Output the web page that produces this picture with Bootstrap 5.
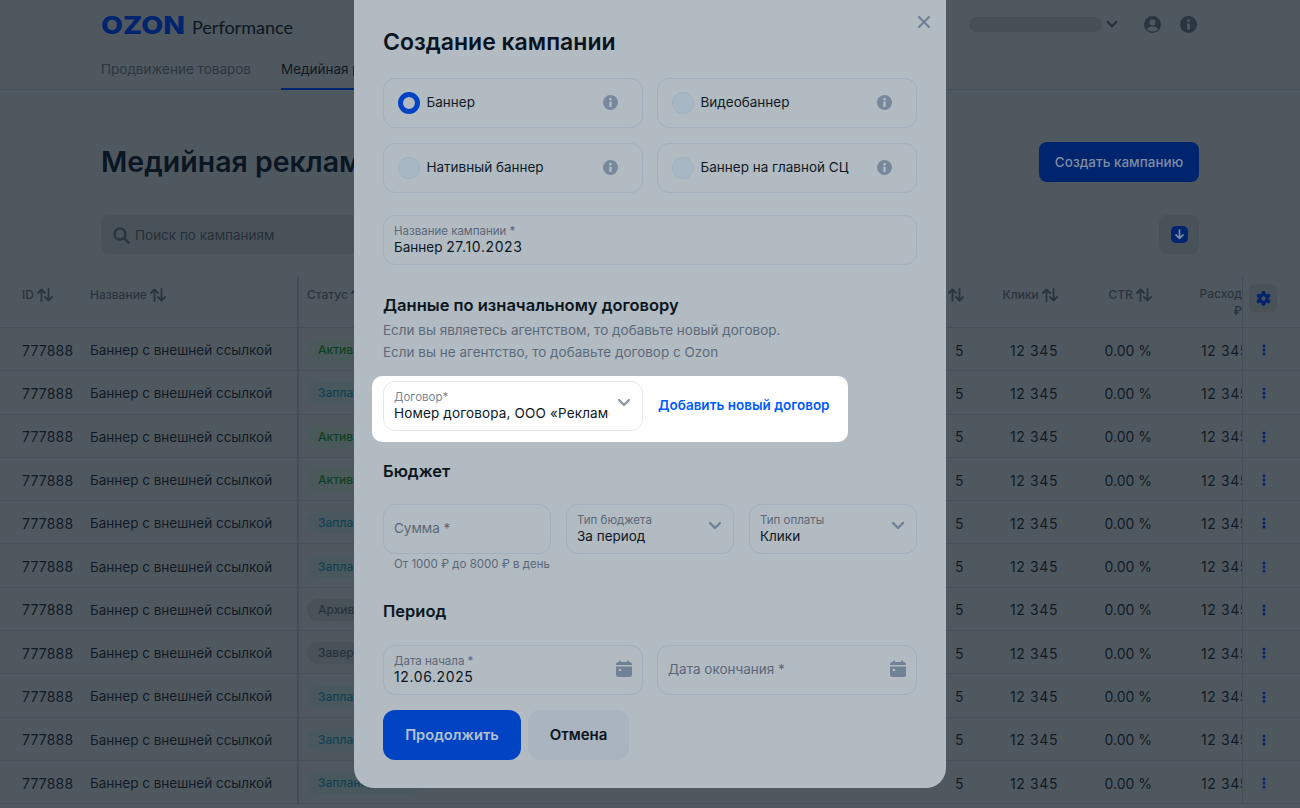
<!DOCTYPE html>
<html lang="ru">
<head>
  <meta charset="UTF-8" />
  <meta name="viewport" content="width=device-width, initial-scale=1" />
  <title>Создание кампании – Ozon Performance</title>
  <link href="https://cdn.jsdelivr.net/npm/bootstrap@5.3.2/dist/css/bootstrap.min.css" rel="stylesheet" />
  <style>
    html, body { height: 808px; overflow: hidden; }
    body { background: #50585f; font-family: Inter, "Liberation Sans", sans-serif; font-size: 13.5px; color: #101b26; position: relative; }
    .dg { font-size: 14px; letter-spacing: .6px; }

    /* страница под модалкой */
    .top-head { height: 90px; border-bottom: 1px solid #465059; padding-left: 101px; position: relative; }
    .logo-row { height: 53px; align-items: center; }
    .logo-word { width: 84px; height: 20px; margin-right: 7px; margin-top: -1px; }
    .logo-perf { font-family: Lato, sans-serif; font-size: 18px; color: #0b1722; padding-top: 1px; }
    .tab-row { gap: 30px; height: 37px; }
    .tab-link { color: #2c3640; line-height: 32px; height: 37px; }
    .tab-active { color: #0d1822; border-bottom: 2px solid #00246e; }
    .top-right { position: absolute; top: 16px; left: 969px; align-items: center; }
    .acc-pill { width: 133px; height: 15px; background: #474f56; border-radius: 8px; margin-right: 4px; }
    .page-title { font-size: 28.500px; font-weight: 600; line-height: 38px; color: #0a1622; margin: 0; white-space: nowrap; }
    .title-row { height: 40px; margin-top: 52px; padding: 0 101px; align-items: center; }
    .btn-create { width: 160px; height: 40px; background: #00246e; color: #7e8ca3; border: 0; border-radius: 8px; font-size: 13.5px; font-weight: 500; padding: 0; }
    .tools-row { margin-top: 33px; height: 39px; padding: 0 101px; }
    .search-box { width: 300px; background: #4a5259; border-radius: 8px; color: #262f38; gap: 5px; padding-left: 12px; padding-top: 1px; }
    .square-btn { width: 40px; background: #4a5259; border-radius: 8px; }

    .grid-wrap { margin-top: 22px; }
    .t-head, .t-row { display: flex; }
    .t-head { height: 52px; border-bottom: 1px solid #454e56; color: #2a343e; font-size: 12px; font-weight: 500; }
    .t-row { height: 43.3px; border-bottom: 1px solid #485159; align-items: center; white-space: nowrap; }
    .c-id { width: 90px; padding-left: 22px; flex: none; }
    .c-name { width: 209px; flex: none; border-right: 2px solid #454e56; height: 100%; display: flex; align-items: center; }
    .c-status { width: 130px; margin-right: 389px; padding-left: 8px; flex: none; overflow: hidden; white-space: nowrap; }
    .c-num { width: 146px; flex: none; text-align: right; }
    .c-clicks, .c-ctr { width: 94px; flex: none; text-align: right; }
    .c-spend { width: 91px; flex: none; overflow: hidden; border-right: 1px solid #454e56; height: 100%; display: flex; align-items: center; padding-left: 49px; }
    .c-act { flex: 1; display: flex; padding-left: 19px; }
    .t-row > div { padding-top: 2px; }
    .t-head > div { padding-top: 10px; height: 51px; display: block; }
    .t-head .c-spend { line-height: 17px; padding-top: 9px; padding-left: 0; text-align: right; padding-right: 0; }
    .t-head .c-act { padding-left: 6px; padding-top: 8px; }
    .sort-ic { width: 16px; height: 14px; vertical-align: -3px; }
    .gear-box { width: 28px; height: 28px; background: #4a5259; border-radius: 6px; display: flex; align-items: center; justify-content: center; }
    .chip-s { display: inline-block; height: 22px; line-height: 22px; padding: 0 11px; border-radius: 11px; font-size: 12px; font-weight: 500; }
    .chip-on { background: #4a5a5a; color: #0f3f24; }
    .chip-plan { background: #49585f; color: #15404f; }
    .chip-off { background: #4a5259; color: #28323b; }

    /* модалка */
    .modal-sheet { position: absolute; left: 354px; top: 0; width: 592px; height: 788px; background: #b2bac2; border-radius: 0 0 20px 20px; padding: 28px 29px 0; }
    .close-x { position: absolute; right: 15px; top: 15px; width: 14px; height: 14px; }
    .sheet-title { font-size: 23px; font-weight: 600; line-height: 28px; color: #0a1420; margin: 0 0 21.500px; }
    .pick-grid { display: grid; grid-template-columns: 260px 260px; column-gap: 14px; row-gap: 15px; }
    .pick-tile { height: 50px; border: 1.5px solid #a3afbc; border-radius: 12px; padding: 0 13.500px; gap: 7px; align-items: center; color: #0f1a25; }
    .radio-dot { width: 22px; height: 22px; border-radius: 50%; background: #a8b7c4; border: 1px solid #9fb0bf; flex: none; }
    .radio-on { background: #b2bac2; border: 5.5px solid #0044c4; }
    .pick-info { margin-left: auto; margin-right: 11px; flex: none; }
    .fld { height: 50px; border: 1.5px solid #a3afbc; border-radius: 12px; padding: 0 10px; position: relative; color: #0c1722; }
    .fld-lbl { font-size: 11.500px; line-height: 14px; color: #5a6878; display: block; padding-top: 8px; }
    .fld-val { line-height: 18px; white-space: nowrap; display: block; }
    .fld-ph { line-height: 47px; color: #5a6878; }
    .fld-ic { position: absolute; right: 11px; top: 16px; }
    .sec-head { font-size: 16.500px; font-weight: 600; line-height: 24px; color: #0b1620; margin: 0; }
    .sec-sub { line-height: 22px; color: #5c6a78; }
    .hl-box { display: inline-flex; background: #fff; border-radius: 10px; padding: 5px 18px 11px 11px; margin: 13px 0 0 -11px; gap: 15px; align-items: center; }
    .hl-box .fld { width: 260px; border-color: #e3e8ee; overflow: hidden; }
    .hl-box .fld-val { width: 215px; overflow: hidden; letter-spacing: .15px; }
    .hl-box .fld-lbl { color: #7a8696; }
    .hl-link { color: #005bff; font-weight: 600; font-size: 13.5px; text-decoration: none; white-space: nowrap; padding-bottom: 1px; }
    .three-grid { display: grid; grid-template-columns: 168px 168px 168px; column-gap: 15px; }
    .two-grid { display: grid; grid-template-columns: 260px 260px; column-gap: 14px; }
    .hint-line { font-size: 11.500px; line-height: 16px; color: #5a6878; padding-left: 11px; margin-top: 2px; }
    .btn-go { width: 138px; height: 50px; background: #0044c4; color: #b4c0d0; border: 0; border-radius: 12px; font-weight: 600; font-size: 14.700px; padding: 0; }
    .btn-no { width: 101px; height: 50px; background: #a9b4be; color: #0a1420; border: 0; border-radius: 12px; font-weight: 600; font-size: 15px; padding: 0; }
    .btn-pair { gap: 7px; margin-top: 15px; }
  </style>
</head>
<body>
  <svg width="0" height="0" class="position-absolute">
    <defs>
      <symbol id="ic-info" viewBox="0 0 16 16"><circle cx="8" cy="8" r="8" fill="currentColor"/><circle cx="8" cy="4.4" r="1.4" fill="var(--hole)"/><rect x="6.7" y="6.9" width="2.6" height="6" rx="1" fill="var(--hole)"/></symbol>
      <symbol id="ic-chev" viewBox="0 0 14 10"><path d="M2 2l5 5 5-5" fill="none" stroke="currentColor" stroke-width="2.400" stroke-linecap="round" stroke-linejoin="round"/></symbol>
      <symbol id="ic-cal" viewBox="0 0 18 18"><path d="M5 0.5a1 1 0 0 1 1 1V2h6v-.5a1 1 0 0 1 2 0V2h.5A2.5 2.5 0 0 1 17 4.500V5H1v-.5A2.500 2.500 0 0 1 3.500 2H4v-.5a1 1 0 0 1 1-1z" fill="currentColor"/><path d="M1 6.500h16v8A2.500 2.500 0 0 1 14.500 17h-11A2.500 2.500 0 0 1 1 14.500z" fill="currentColor"/><circle cx="5" cy="10" r="1.300" fill="#b2bac2"/></symbol>
      <symbol id="ic-sort" viewBox="0 0 16 14"><path d="M4.500 13V2M1 5l3.500-3.500L8 5M11.500 1v11M8 9l3.500 3.500L15 9" fill="none" stroke="currentColor" stroke-width="1.800" stroke-linecap="round" stroke-linejoin="round"/></symbol>
    </defs>
  </svg>

  <header class="top-head">
    <div class="d-flex logo-row">
      <svg class="logo-word" viewBox="0 0 84 20"><text x="0" y="18" font-family="Inter, sans-serif" font-weight="800" font-size="25" fill="#00246e" textLength="84" lengthAdjust="spacingAndGlyphs">OZON</text></svg>
      <span class="logo-perf">Performance</span>
    </div>
    <nav class="d-flex tab-row">
      <span class="tab-link">Продвижение товаров</span>
      <span class="tab-link tab-active">Медийная реклама</span>
    </nav>
    <div class="d-flex top-right">
      <div class="acc-pill"></div>
      <svg width="12" height="9" viewBox="0 0 14 10" style="color:#262f38;margin-right:26px"><use href="#ic-chev"/></svg>
      <svg width="17" height="17" viewBox="0 0 17 17" style="margin-right:19px"><circle cx="8.500" cy="8.500" r="8.500" fill="#2b353f"/><circle cx="8.500" cy="6.500" r="3" fill="#50585f"/><path d="M3 13.500c1-2.500 3-3 5.500-3s4.500.5 5.500 3c-1.500 1.500-3.500 2-5.500 2s-4-.5-5.500-2z" fill="#50585f"/></svg>
      <svg width="17" height="17" style="color:#2b353f;--hole:#50585f"><use href="#ic-info"/></svg>
    </div>
  </header>

  <div class="d-flex justify-content-between title-row">
    <h1 class="page-title">Медийная реклама</h1>
    <button class="btn-create" type="button">Создать кампанию</button>
  </div>
  <div class="d-flex justify-content-between tools-row">
    <div class="d-flex align-items-center search-box">
      <svg width="17" height="17" viewBox="0 0 17 17"><circle cx="7" cy="7" r="5.500" fill="none" stroke="#2b353f" stroke-width="2.400"/><path d="M11 11l4.500 4.500" stroke="#2b353f" stroke-width="2.600" stroke-linecap="round"/></svg>
      <span>Поиск по кампаниям</span>
    </div>
    <div class="d-flex align-items-center justify-content-center square-btn">
      <svg width="17" height="17" viewBox="0 0 17 17"><rect width="17" height="17" rx="5" fill="#00246e"/><path d="M8.500 4v8M5 8.800l3.500 3.500L12 8.800" fill="none" stroke="#7e8ca3" stroke-width="1.700" stroke-linecap="round" stroke-linejoin="round"/></svg>
    </div>
  </div>

  <section class="grid-wrap">
    <div class="t-head">
      <div class="c-id">ID <svg class="sort-ic"><use href="#ic-sort"/></svg></div>
      <div class="c-name">Название <svg class="sort-ic"><use href="#ic-sort"/></svg></div>
      <div class="c-status">Статус <svg class="sort-ic"><use href="#ic-sort"/></svg></div>
      <div class="c-num"><svg class="sort-ic"><use href="#ic-sort"/></svg></div>
      <div class="c-clicks">Клики <svg class="sort-ic"><use href="#ic-sort"/></svg></div>
      <div class="c-ctr">CTR <svg class="sort-ic"><use href="#ic-sort"/></svg></div>
      <div class="c-spend">Расход<br />₽</div>
      <div class="c-act"><div class="gear-box">
        <svg width="15" height="15" viewBox="0 0 16 16" fill="#00246e"><path fill-rule="evenodd" d="M8 2.800a5.200 5.200 0 1 0 0 10.400A5.200 5.200 0 0 0 8 2.800zm0 3a2.200 2.200 0 1 1 0 4.400 2.200 2.200 0 0 1 0-4.400z"/><circle cx="8" cy="2.300" r="2.300"/><circle cx="8" cy="13.700" r="2.300"/><circle cx="3" cy="5.100" r="2.300"/><circle cx="13" cy="5.100" r="2.300"/><circle cx="3" cy="10.900" r="2.300"/><circle cx="13" cy="10.900" r="2.300"/><circle cx="8" cy="8" r="2.100" fill="#4a5259"/></svg>
      </div></div>
    </div>
    <div id="tbodyRows"></div>
  </section>

  <div class="modal-sheet" style="--hole:#b2bac2">
    <svg class="close-x" viewBox="0 0 14 14"><path d="M2 2l10 10M12 2L2 12" stroke="#6f8195" stroke-width="2.200" stroke-linecap="round"/></svg>
    <h2 class="sheet-title">Создание кампании</h2>

    <div class="pick-grid">
      <div class="d-flex pick-tile"><span class="radio-dot radio-on"></span><span>Баннер</span><svg class="pick-info" width="15" height="15" style="color:#77889a"><use href="#ic-info"/></svg></div>
      <div class="d-flex pick-tile"><span class="radio-dot"></span><span>Видеобаннер</span><svg class="pick-info" width="15" height="15" style="color:#77889a"><use href="#ic-info"/></svg></div>
      <div class="d-flex pick-tile"><span class="radio-dot"></span><span>Нативный баннер</span><svg class="pick-info" width="15" height="15" style="color:#77889a"><use href="#ic-info"/></svg></div>
      <div class="d-flex pick-tile"><span class="radio-dot"></span><span>Баннер на главной СЦ</span><svg class="pick-info" width="15" height="15" style="color:#77889a"><use href="#ic-info"/></svg></div>
    </div>

    <div class="fld" style="margin-top:22.500px">
      <span class="fld-lbl">Название кампании *</span>
      <span class="fld-val">Баннер <span class="dg">27.10.2023</span></span>
    </div>

    <h3 class="sec-head" style="margin-top:28px">Данные по изначальному договору</h3>
    <div class="sec-sub mt-0" style="padding-top:2px">Если вы являетесь агентством, то добавьте новый договор.</div>
    <div class="sec-sub">Если вы не агентство, то добавьте договор с Ozon</div>

    <div class="hl-box">
      <div class="fld">
        <span class="fld-lbl">Договор*</span>
        <span class="fld-val">Номер договора, ООО «Рекламодатель»</span>
        <svg class="fld-ic" width="14" height="10" style="color:#8d99a6"><use href="#ic-chev"/></svg>
      </div>
      <a class="hl-link" href="#">Добавить новый договор</a>
    </div>

    <h3 class="sec-head" style="margin-top:17px">Бюджет</h3>
    <div class="three-grid" style="margin-top:21px">
      <div class="fld"><div class="fld-ph">Сумма *</div></div>
      <div class="fld">
        <span class="fld-lbl">Тип бюджета</span><span class="fld-val">За период</span>
        <svg class="fld-ic" width="14" height="10" style="color:#6f8195"><use href="#ic-chev"/></svg>
      </div>
      <div class="fld">
        <span class="fld-lbl">Тип оплаты</span><span class="fld-val">Клики</span>
        <svg class="fld-ic" width="14" height="10" style="color:#6f8195"><use href="#ic-chev"/></svg>
      </div>
    </div>
    <div class="hint-line">От 1000 ₽ до 8000 ₽ в день</div>

    <h3 class="sec-head" style="margin-top:27px">Период</h3>
    <div class="two-grid" style="margin-top:22px">
      <div class="fld">
        <span class="fld-lbl">Дата начала *</span><span class="fld-val dg">12.06.2025</span>
        <svg class="fld-ic" style="top:14px;right:9px;color:#718296" width="18" height="18"><use href="#ic-cal"/></svg>
      </div>
      <div class="fld">
        <div class="fld-ph">Дата окончания *</div>
        <svg class="fld-ic" style="top:14px;right:9px;color:#718296" width="18" height="18"><use href="#ic-cal"/></svg>
      </div>
    </div>

    <div class="d-flex btn-pair">
      <button class="btn-go" type="button">Продолжить</button>
      <button class="btn-no" type="button">Отмена</button>
    </div>
  </div>

  <script>
    // строки таблицы
    const statuses = [
      ['Активна', 'chip-on'], ['Запланирована', 'chip-plan'], ['Активна', 'chip-on'], ['Активна', 'chip-on'],
      ['Запланирована', 'chip-plan'], ['Запланирована', 'chip-plan'], ['Архивная', 'chip-off'], ['Завершена', 'chip-off'],
      ['Запланирована', 'chip-plan'], ['Запланирована', 'chip-plan'], ['Запланирована', 'chip-plan']
    ];
    const tbody = document.getElementById('tbodyRows');
    statuses.forEach(s => {
      const row = document.createElement('div');
      row.className = 't-row';
      row.innerHTML = `
        <div class="c-id dg" style="letter-spacing:.2px">777888</div>
        <div class="c-name">Баннер с внешней ссылкой</div>
        <div class="c-status"><span class="chip-s ${s[1]}">${s[0]}</span></div>
        <div class="c-num dg">5</div>
        <div class="c-clicks dg">12 345</div>
        <div class="c-ctr dg" style="letter-spacing:0">0.00 %</div>
        <div class="c-spend dg">12 345</div>
        <div class="c-act"><svg width="4" height="12" viewBox="0 0 4 12" fill="#00246e"><circle cx="2" cy="2" r="1.500"/><circle cx="2" cy="6" r="1.500"/><circle cx="2" cy="10" r="1.500"/></svg></div>
      `;
      tbody.appendChild(row);
    });
  </script>
  <script src="https://cdn.jsdelivr.net/npm/bootstrap@5.3.2/dist/js/bootstrap.bundle.min.js"></script>
</body>
</html>
